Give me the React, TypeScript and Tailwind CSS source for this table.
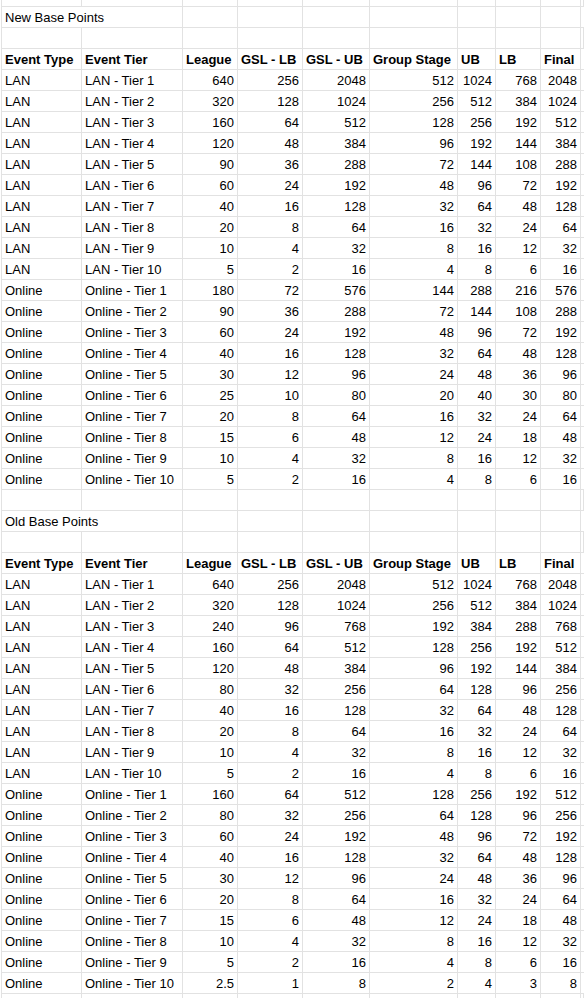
import React from "react";

const COLS =
  "grid grid-cols-[80px_101px_55px_65px_67px_88px_38px_45px_40px_1fr]";
const CELL = "border-r border-b border-[#e2e2e2] px-[3px] pt-px whitespace-nowrap overflow-hidden";

const headers = ["Event Type", "Event Tier", "League", "GSL - LB", "GSL - UB", "Group Stage", "UB", "LB", "Final"];

const lanTier = (t: number) => `LAN - Tier ${t}`;
const onTier = (t: number) => `Online - Tier ${t}`;

const newPoints: (string | number)[][] = [
  ["LAN", lanTier(1), 640, 256, 2048, 512, 1024, 768, 2048],
  ["LAN", lanTier(2), 320, 128, 1024, 256, 512, 384, 1024],
  ["LAN", lanTier(3), 160, 64, 512, 128, 256, 192, 512],
  ["LAN", lanTier(4), 120, 48, 384, 96, 192, 144, 384],
  ["LAN", lanTier(5), 90, 36, 288, 72, 144, 108, 288],
  ["LAN", lanTier(6), 60, 24, 192, 48, 96, 72, 192],
  ["LAN", lanTier(7), 40, 16, 128, 32, 64, 48, 128],
  ["LAN", lanTier(8), 20, 8, 64, 16, 32, 24, 64],
  ["LAN", lanTier(9), 10, 4, 32, 8, 16, 12, 32],
  ["LAN", lanTier(10), 5, 2, 16, 4, 8, 6, 16],
  ["Online", onTier(1), 180, 72, 576, 144, 288, 216, 576],
  ["Online", onTier(2), 90, 36, 288, 72, 144, 108, 288],
  ["Online", onTier(3), 60, 24, 192, 48, 96, 72, 192],
  ["Online", onTier(4), 40, 16, 128, 32, 64, 48, 128],
  ["Online", onTier(5), 30, 12, 96, 24, 48, 36, 96],
  ["Online", onTier(6), 25, 10, 80, 20, 40, 30, 80],
  ["Online", onTier(7), 20, 8, 64, 16, 32, 24, 64],
  ["Online", onTier(8), 15, 6, 48, 12, 24, 18, 48],
  ["Online", onTier(9), 10, 4, 32, 8, 16, 12, 32],
  ["Online", onTier(10), 5, 2, 16, 4, 8, 6, 16],
];

const oldPoints: (string | number)[][] = [
  ["LAN", lanTier(1), 640, 256, 2048, 512, 1024, 768, 2048],
  ["LAN", lanTier(2), 320, 128, 1024, 256, 512, 384, 1024],
  ["LAN", lanTier(3), 240, 96, 768, 192, 384, 288, 768],
  ["LAN", lanTier(4), 160, 64, 512, 128, 256, 192, 512],
  ["LAN", lanTier(5), 120, 48, 384, 96, 192, 144, 384],
  ["LAN", lanTier(6), 80, 32, 256, 64, 128, 96, 256],
  ["LAN", lanTier(7), 40, 16, 128, 32, 64, 48, 128],
  ["LAN", lanTier(8), 20, 8, 64, 16, 32, 24, 64],
  ["LAN", lanTier(9), 10, 4, 32, 8, 16, 12, 32],
  ["LAN", lanTier(10), 5, 2, 16, 4, 8, 6, 16],
  ["Online", onTier(1), 160, 64, 512, 128, 256, 192, 512],
  ["Online", onTier(2), 80, 32, 256, 64, 128, 96, 256],
  ["Online", onTier(3), 60, 24, 192, 48, 96, 72, 192],
  ["Online", onTier(4), 40, 16, 128, 32, 64, 48, 128],
  ["Online", onTier(5), 30, 12, 96, 24, 48, 36, 96],
  ["Online", onTier(6), 20, 8, 64, 16, 32, 24, 64],
  ["Online", onTier(7), 15, 6, 48, 12, 24, 18, 48],
  ["Online", onTier(8), 10, 4, 32, 8, 16, 12, 32],
  ["Online", onTier(9), 5, 2, 16, 4, 8, 6, 16],
  ["Online", onTier(10), 2.5, 1, 8, 2, 4, 3, 8],
];

function EmptyRow({ h = "h-[21px]", bottom = true }: { h?: string; bottom?: boolean }) {
  return (
    <div className={`${COLS} ${h}`}>
      {Array.from({ length: 10 }).map((_, i) => (
        <div key={i} className={`border-r border-[#e2e2e2] ${bottom ? "border-b" : ""}`} />
      ))}
    </div>
  );
}

function TitleRow({ title }: { title: string }) {
  return (
    <div className={`${COLS} h-[21px]`}>
      <div className={`${CELL} col-span-2`}>{title}</div>
      {Array.from({ length: 8 }).map((_, i) => (
        <div key={i} className={CELL} />
      ))}
    </div>
  );
}

function HeaderRow() {
  return (
    <div className={`${COLS} h-[21px] font-bold`}>
      {headers.map((h) => (
        <div key={h} className={CELL}>
          {h}
        </div>
      ))}
      <div className={CELL} />
    </div>
  );
}

function DataRow({ row }: { row: (string | number)[] }) {
  return (
    <div className={`${COLS} h-[21px]`}>
      {row.map((v, i) => (
        <div key={i} className={`${CELL} ${typeof v === "number" ? "text-right" : ""}`}>
          {v}
        </div>
      ))}
      <div className={CELL} />
    </div>
  );
}

function Section({ title, rows }: { title: string; rows: (string | number)[][] }) {
  return (
    <>
      <TitleRow title={title} />
      <EmptyRow />
      <HeaderRow />
      {rows.map((r, i) => (
        <DataRow key={i} row={r} />
      ))}
    </>
  );
}

export default function App() {
  return (
    <div className="w-[584px] h-[998px] overflow-hidden bg-white pl-px font-['Liberation_Sans',Arial,sans-serif] text-[13px] leading-[20px] text-black">
      <div className="border-l border-[#e2e2e2]">
        <EmptyRow h="h-[7px]" />
        <Section title="New Base Points" rows={newPoints} />
        <EmptyRow />
        <Section title="Old Base Points" rows={oldPoints} />
        <EmptyRow h="h-[6px]" bottom={false} />
      </div>
    </div>
  );
}
